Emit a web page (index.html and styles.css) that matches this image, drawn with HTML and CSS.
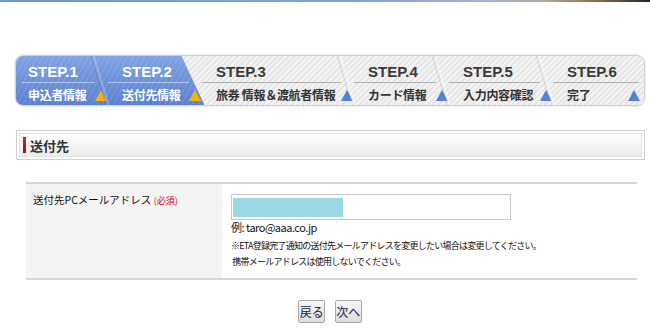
FILE: index.html
```html
<!DOCTYPE html>
<html lang="ja">

<head>
    <meta charset="UTF-8">
    <meta name="viewport" content="width=device-width, initial-scale=1.0">
    <title>送付先</title>

    <link rel="stylesheet" href="styles.css">

</head>

<body>

    <div class="topline"></div>

    <div id="main">

        <!-- Pasos del tramite -->
        <ol class="steps">
            <li class="step done first">
                <span class="step-no">STEP.1</span>
                <span class="step-name">申込者情報<i class="tri"></i></span>
            </li>
            <li class="step done second">
                <span class="step-no">STEP.2</span>
                <span class="step-name">送付先情報<i class="tri"></i></span>
            </li>
            <li class="step third">
                <span class="step-no">STEP.3</span>
                <span class="step-name">旅券 情報＆渡航者情報<i class="tri"></i></span>
            </li>
            <li class="step fourth">
                <span class="step-no">STEP.4</span>
                <span class="step-name">カード情報<i class="tri"></i></span>
            </li>
            <li class="step fifth">
                <span class="step-no">STEP.5</span>
                <span class="step-name">入力内容確認<i class="tri"></i></span>
            </li>
            <li class="step last">
                <span class="step-no">STEP.6</span>
                <span class="step-name">完了<i class="tri"></i></span>
            </li>
        </ol>

        <h2 class="section-head"><span class="section-title">送付先</span></h2>

        <table class="form">
            <tr>
                <th>送付先PCメールアドレス <em>(必須)</em></th>
                <td>
                    <div class="mail-input"><span class="filled"></span></div>
                    <p class="example">例: taro@aaa.co.jp</p>
                    <p class="note">※ETA登録完了通知の送付先メールアドレスを変更したい場合は変更してください。<br>
                        &nbsp;携帯メールアドレスは使用しないでください。</p>
                </td>
            </tr>
        </table>

        <div class="buttons">
            <button type="button">戻る</button>
            <button type="button">次へ</button>
        </div>

    </div>
</body>

</html>
```

FILE: styles.css
```css
body {
    margin: 0;
    background-color: #ffffff;
    font-family: "Noto Sans CJK JP", "Liberation Sans", sans-serif;
    color: #222222;
}

.topline {
    height: 2px;
    background: linear-gradient(to right, #6c9ad6 0%, #7ea4dc 55%, #a4b2da 76%, #b3a797 84%, #8a6a44 92%, #1c2a2c 100%);
}

#main {
    width: 630px;
    margin-left: 15px;
}

/* --- barra de pasos --- */

.steps {
    position: relative;
    display: flex;
    height: 49px;
    margin: 53px 0 0;
    padding: 0;
    list-style: none;
    border: 1px solid #d2d2d2;
    border-radius: 8px;
    overflow: hidden;
    background: repeating-linear-gradient(135deg, #e6e6e6 0 2px, #f4f4f4 2px 4px);
    box-shadow: 0 0 0 1px #efefef;
}

/* zona azul de los pasos terminados */
.steps::before {
    content: "";
    position: absolute;
    top: 0;
    bottom: 0;
    left: -30px;
    width: 207px;
    transform: skewX(25deg);
    background: repeating-linear-gradient(135deg, rgba(255, 255, 255, 0.10) 0 1px, transparent 1px 4px),
        linear-gradient(#7fa3e3, #5b80cf);
}

.step {
    position: relative;
    display: flex;
    flex-direction: column;
    box-sizing: border-box;
    padding-left: 22px;
}

.step + .step::before {
    content: "";
    position: absolute;
    top: 0;
    bottom: 0;
    left: -2px;
    width: 4px;
    transform: skewX(17deg);
    background: linear-gradient(to right, rgba(0, 0, 0, 0.10), rgba(255, 255, 255, 0.85));
}

.done + .done::before {
    background: linear-gradient(to right, rgba(40, 70, 150, 0.25), rgba(255, 255, 255, 0.35));
}

.done + .step:not(.done)::before {
    display: none;
}

.first { width: 84px; padding-left: 12px; }
.second { width: 94px; }
.third { width: 152px; }
.fourth { width: 95px; }
.fifth { width: 104px; }
.last { flex: 1; }

.step-no {
    height: 26px;
    margin: 0 5px 0 -14px;
    padding-left: 14px;
    border-bottom: 1px solid #b0b0b0;
    font: bold 15px/32px "Liberation Sans", sans-serif;
    color: #3a3a3a;
}

.first .step-no {
    margin-left: -7px;
    padding-left: 7px;
}

.step-name {
    display: flex;
    justify-content: space-between;
    align-items: center;
    height: 22px;
    font-size: 12px;
    font-weight: bold;
    letter-spacing: -0.3px;
    color: #333333;
    white-space: nowrap;
}

.done .step-no,
.done .step-name {
    color: #ffffff;
}

.done .step-no {
    border-bottom-color: rgba(255, 255, 255, 0.45);
}

.tri {
    align-self: flex-end;
    width: 0;
    height: 0;
    margin: 0 -7px 4px 0;
    border-left: 6px solid transparent;
    border-right: 6px solid transparent;
    border-bottom: 11px solid #5282d8;
}

.done .tri {
    border-bottom-color: #f4b400;
}

.last .tri {
    margin-right: 4px;
}

/* --- cabecera de seccion --- */

.section-head {
    margin: 24px 0 0 1px;
    padding: 2px;
    border: 1px solid #d0d0d0;
    font-size: 13px;
    font-weight: bold;
}

.section-title {
    display: flex;
    align-items: center;
    height: 22px;
    padding-left: 3px;
    border: 1px solid #e2e2e2;
    background: linear-gradient(#fefefe, #ececec);
    color: #333333;
}

.section-title::before {
    content: "";
    width: 3px;
    height: 16px;
    margin-right: 4px;
    background: linear-gradient(#c0282a, #8e1518);
}

/* --- formulario --- */

table.form {
    width: 611px;
    margin: 22px 0 0 11px;
    border-collapse: collapse;
    border-top: 2px solid #d6d6d6;
    border-bottom: 2px solid #d6d6d6;
}

table.form th {
    width: 196px;
    padding: 8px 0 0 7px;
    box-sizing: border-box;
    vertical-align: top;
    text-align: left;
    background-color: #f4f4f4;
    font-size: 10.5px;
    font-weight: normal;
    color: #111111;
}

table.form th em {
    font-style: normal;
    font-size: 9px;
    color: #e00000;
}

table.form td {
    padding: 10px 9px 9px 9px;
    vertical-align: top;
}

.mail-input {
    width: 280px;
    height: 26px;
    padding: 3px 0 0 1px;
    box-sizing: border-box;
    border: 1px solid #c8c8c8;
}

.filled {
    display: block;
    width: 110px;
    height: 19px;
    background-color: #9bd8e8;
}

.example {
    margin: 1px 0 0;
    font-size: 11px;
    line-height: 12px;
    letter-spacing: -0.5px;
    color: #111111;
}

.note {
    margin: 5px 0 0;
    font-size: 9px;
    line-height: 15.5px;
    letter-spacing: -0.75px;
    color: #111111;
}

.buttons {
    margin-top: 18px;
    text-align: center;
}

.buttons button {
    width: 27px;
    height: 23px;
    margin: 0 3px;
    padding: 0;
    border: 1px solid #a8a8a8;
    border-radius: 2px;
    background: linear-gradient(#f7f7f7, #dddddd);
    font-family: "Noto Sans CJK JP", sans-serif;
    font-size: 12px;
    color: #1a1a40;
}
```
